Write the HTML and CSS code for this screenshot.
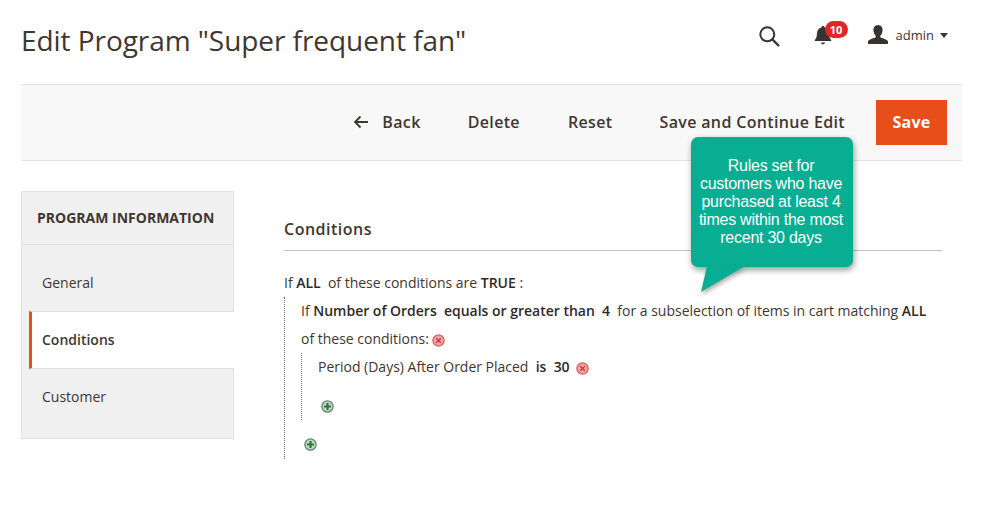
FILE: index.html
```html
<!DOCTYPE html>
<html lang="en">
<head>
<meta charset="utf-8">
<title>Edit Program</title>
<link rel="stylesheet" href="styles.css">
</head>
<body>
<svg class="defs" width="0" height="0">
  <defs>
    <radialGradient id="redfill"><stop offset="0" stop-color="#f7b4b4"/><stop offset=".7" stop-color="#f3a0a0"/><stop offset="1" stop-color="#ec7d7d"/></radialGradient>
    <radialGradient id="greenfill"><stop offset="0" stop-color="#d6e6d8"/><stop offset=".75" stop-color="#c2d6c5"/><stop offset="1" stop-color="#9dbba3"/></radialGradient>
  </defs>
</svg>
<div class="page">
  <header class="header">
    <h1 class="title">Edit Program "Super frequent fan"</h1>
    <div class="tools">
      <svg class="icon-search" width="21" height="21" viewBox="0 0 21 21"><circle cx="8.300" cy="8.300" r="7" fill="none" stroke="#373330" stroke-width="2"/><path d="M13.300 13.300l6.700 6.700" stroke="#373330" stroke-width="2.400" fill="none"/></svg>
      <div class="notify">
        <svg class="icon-bell" width="18" height="20" viewBox="0 0 18 20"><path d="M9 1c1 0 1.600.6 1.700 1.500C13.500 3.200 15 5.500 15 8.500c0 3 .8 4.800 2.200 6.500v1H.8v-1C2.200 13.300 3 11.500 3 8.500c0-3 1.500-5.300 4.300-6C7.400 1.600 8 1 9 1zM7 17.500h4c0 1-.9 1.800-2 1.800s-2-.8-2-1.800z" fill="#373330"/></svg>
        <span class="badge">10</span>
      </div>
      <div class="user">
        <svg class="icon-user" width="20" height="20" viewBox="0 0 20 20"><path d="M10 0c3 0 4.600 2.200 4.600 5 0 2.300-1 4.700-2.300 5.800v1.500c1 .8 6.700 1.800 7.700 4.200V19H0v-2.500c1-2.400 6.700-3.400 7.700-4.200v-1.500C6.400 9.700 5.400 7.300 5.400 5 5.400 2.200 7 0 10 0z" fill="#373330"/></svg>
        <span class="user-name">admin</span>
        <span class="caret"></span>
      </div>
    </div>
  </header>

  <nav class="actions">
    <a class="action action-back">
      <svg width="16" height="14" viewBox="0 0 16 14"><path d="M15 7H2M7.500 1.500L2 7l5.500 5.500" fill="none" stroke="#41362f" stroke-width="1.800"/></svg>
      <span>Back</span>
    </a>
    <a class="action">Delete</a>
    <a class="action action-reset">Reset</a>
    <a class="action action-continue">Save and Continue Edit</a>
    <a class="save">Save</a>
  </nav>

  <main class="main">
    <aside class="sidebar">
      <div class="side-title">PROGRAM INFORMATION</div>
      <a class="side-item side-general">General</a>
      <a class="side-item side-active">Conditions</a>
      <a class="side-item side-customer">Customer</a>
    </aside>
    <section class="content">
      <h2 class="section-title">Conditions</h2>
      <div class="rule-line rule-head">If <b>ALL</b>&nbsp; of these conditions are <b>TRUE</b> :</div>
      <div class="tree">
        <div class="rule-line">If <b>Number of Orders</b>&nbsp; <b>equals or greater than</b>&nbsp; <b>4</b>&nbsp; for a subselection of items in cart matching <b>ALL</b></div>
        <div class="rule-line">of these conditions:
          <svg class="ico-x" width="13" height="13" viewBox="0 0 13 13"><circle cx="6.500" cy="6.500" r="5.700" fill="url(#redfill)" stroke="#dd5a5a" stroke-width="1.100"/><path d="M4.200 4.200l4.600 4.600M8.800 4.200l-4.600 4.600" stroke="#c23b3b" stroke-width="1.400"/></svg>
        </div>
        <div class="tree tree-inner">
          <div class="rule-line">Period (Days) After Order Placed&nbsp; <b>is</b>&nbsp; <b>30</b>&nbsp;
            <svg class="ico-x" width="13" height="13" viewBox="0 0 13 13"><circle cx="6.500" cy="6.500" r="5.700" fill="url(#redfill)" stroke="#dd5a5a" stroke-width="1.100"/><path d="M4.200 4.200l4.600 4.600M8.800 4.200l-4.600 4.600" stroke="#c23b3b" stroke-width="1.400"/></svg>
          </div>
          <div class="plus-row">
            <svg width="13" height="13" viewBox="0 0 13 13"><circle cx="6.500" cy="6.500" r="5.700" fill="url(#greenfill)" stroke="#64896d" stroke-width="1.200"/><path d="M6.500 3v7M3 6.500h7" stroke="#2a7a3c" stroke-width="2.200"/></svg>
          </div>
        </div>
        <div class="plus-row plus-outer">
          <svg width="13" height="13" viewBox="0 0 13 13"><circle cx="6.500" cy="6.500" r="5.700" fill="url(#greenfill)" stroke="#64896d" stroke-width="1.200"/><path d="M6.500 3v7M3 6.500h7" stroke="#2a7a3c" stroke-width="2.200"/></svg>
        </div>
      </div>
    </section>
  </main>

  <div class="callout">
    <p class="callout-text">Rules set for customers who have purchased at least 4 times within the most recent 30 days</p>
    <svg class="callout-tail" width="50" height="28" viewBox="0 0 50 28"><path d="M6 0H44L0 26z" fill="#07ae92"/></svg>
  </div>
</div>
</body>
</html>
```
FILE: styles.css
```css
* { box-sizing: border-box; }
html, body { margin: 0; padding: 0; background: #fff; }
body { font-family: "Open Sans", sans-serif; color: #41362f; }
.defs { position: absolute; }
.page { position: relative; width: 981px; height: 507px; padding: 0 19px 0 21px; overflow: hidden; }

.header { height: 84px; display: flex; align-items: center; justify-content: space-between; padding-right: 14px; }
.title { margin: 0; font-size: 28px; font-weight: 400; line-height: 38px; letter-spacing: -.06px; color: #41362f; position: relative; top: -2px; }
.tools { display: flex; align-items: center; position: relative; top: -7px; }
.icon-search { display: block; margin: 3px 34px 0 0; }
.notify { position: relative; width: 18px; height: 20px; margin-right: 36px; }
.icon-bell { display: block; }
.badge { position: absolute; left: 11px; top: -4px; width: 23px; height: 17px; border-radius: 9px; background: #e22626; color: #fff; font-size: 11px; font-weight: 700; line-height: 17px; text-align: center; }
.user { display: flex; align-items: center; }
.icon-user { display: block; margin-right: 8px; }
.user-name { font-size: 13px; line-height: 18px; color: #41362f; margin-right: 6px; }
.caret { width: 0; height: 0; border-left: 4px solid transparent; border-right: 4px solid transparent; border-top: 5px solid #41362f; }

.actions { height: 77px; background: #f8f8f8; border-top: 1px solid #e3e3e3; border-bottom: 1px solid #e3e3e3; display: flex; align-items: center; justify-content: flex-end; padding-right: 15px; }
.action { display: flex; align-items: center; font-size: 16px; font-weight: 600; letter-spacing: .35px; color: #41362f; margin: 0 48px 2px 0; line-height: 22px; }
.action svg { margin-right: 13px; }
.action-back { margin-right: 47px; }
.action-reset { margin-right: 47px; }
.action-continue { margin-right: 31px; }
.save { width: 71px; height: 45px; background: #e84e1a; color: #fff; font-size: 16px; font-weight: 700; line-height: 45px; text-align: center; letter-spacing: .2px; }

.main { display: flex; padding-top: 30px; }
.sidebar { width: 213px; height: 248px; background: #f0f0f0; border: 1px solid #e3e3e3; display: flex; flex-direction: column; position: relative; }
.side-title { height: 53px; border-bottom: 1px solid #e3e3e3; padding-left: 15px; font-size: 14px; font-weight: 700; line-height: 52px; color: #41362f; }
.side-item { display: flex; align-items: center; padding-left: 20px; font-size: 14px; color: #41362f; }
.side-general { height: 66px; padding-top: 8px; }
.side-active { height: 58px; font-weight: 600; background: #fff; margin: 0 -1px 0 7px; padding: 0 0 2px 10px; border-left: 3px solid #e84e1a; border-top: 1px solid #e3e3e3; border-bottom: 1px solid #e3e3e3; }
.side-customer { height: 69px; padding-bottom: 15px; }

.content { margin-left: 50px; width: 658px; padding-top: 27px; font-size: 14px; color: #41362f; }
.section-title { margin: 0; height: 33px; border-bottom: 1px solid #cac3b4; font-size: 16px; font-weight: 600; letter-spacing: .5px; line-height: 22px; color: #41362f; }
.rule-line { line-height: 28px; height: 28px; white-space: nowrap; letter-spacing: -.01px; }
.rule-line b { font-weight: 600; color: #302a26; }
.rule-head { margin-top: 18px; }
.tree { border-left: 1px dotted #777; padding-left: 16px; height: 162px; }
.tree-inner { height: 67px; }
.ico-x { vertical-align: -3px; margin-left: -.5px; }
.plus-row { height: 39px; padding: 19px 0 0 3px; }
.plus-row svg { display: block; }
.plus-outer { height: 38px; padding: 18px 0 0 3px; }

.callout { position: absolute; left: 691px; top: 137px; width: 162px; height: 130px; background: #07ae92; border-radius: 7px; box-shadow: 1px 3px 6px rgba(0,0,0,.4); padding-top: 20px; }
.callout-text { margin: 0; padding: 0 8px 0 6px; color: #fff; font-family: "Liberation Sans", Arial, sans-serif; font-size: 16px; line-height: 18px; letter-spacing: -.25px; text-align: center; }
.callout-tail { position: absolute; left: 10px; top: 129px; filter: drop-shadow(1px 3px 2px rgba(0,0,0,.3)); }
```
